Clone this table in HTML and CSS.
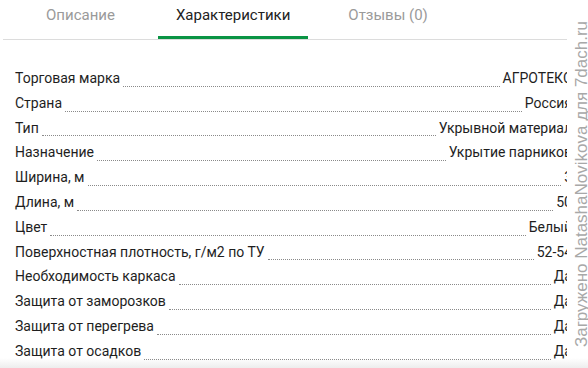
FILE: index.html
```html
<!DOCTYPE html>
<html lang="ru">
<head>
<meta charset="utf-8">
<link rel="stylesheet" href="styles.css">
</head>
<body>
<div class="page">
  <div class="clip">
    <div class="tabs">
      <div class="tab">Описание</div>
      <div class="tab active">Характеристики</div>
      <div class="tab">Отзывы (0)</div>
    </div>
    <div class="specs">
      <div class="row"><span class="label">Торговая марка</span><span class="dots"></span><span class="value">АГРОТЕКС</span></div>
      <div class="row"><span class="label">Страна</span><span class="dots"></span><span class="value">Россия</span></div>
      <div class="row"><span class="label">Тип</span><span class="dots"></span><span class="value">Укрывной материал</span></div>
      <div class="row"><span class="label">Назначение</span><span class="dots"></span><span class="value">Укрытие парников</span></div>
      <div class="row"><span class="label">Ширина, м</span><span class="dots"></span><span class="value">3</span></div>
      <div class="row"><span class="label">Длина, м</span><span class="dots"></span><span class="value">50</span></div>
      <div class="row"><span class="label">Цвет</span><span class="dots"></span><span class="value">Белый</span></div>
      <div class="row"><span class="label">Поверхностная плотность, г/м2 по ТУ</span><span class="dots"></span><span class="value">52-54</span></div>
      <div class="row"><span class="label">Необходимость каркаса</span><span class="dots"></span><span class="value">Да</span></div>
      <div class="row"><span class="label">Защита от заморозков</span><span class="dots"></span><span class="value">Да</span></div>
      <div class="row"><span class="label">Защита от перегрева</span><span class="dots"></span><span class="value">Да</span></div>
      <div class="row"><span class="label">Защита от осадков</span><span class="dots"></span><span class="value">Да</span></div>
    </div>
  </div>
  <div class="watermark">Загружено NatashaNovikova для 7dach.ru</div>
</div>
</body>
</html>
```
FILE: styles.css
```css
html, body {
  margin: 0;
  padding: 0;
  background: #fff;
}
.page {
  position: relative;
  width: 588px;
  height: 368px;
  overflow: hidden;
  font-family: Roboto, "Liberation Sans", sans-serif;
  background: linear-gradient(to bottom, #fff 0, #fff 358px, #ededed 368px);
}
.clip {
  width: 567px;
  height: 368px;
  overflow: hidden;
}
.tabs {
  display: flex;
  margin-left: 3px;
  width: 600px;
  height: 39px;
  border-bottom: 1px solid #dcdcdc;
  padding-left: 25px;
  box-sizing: content-box;
}
.tab {
  box-sizing: border-box;
  height: 39px;
  padding: 6px 18px 0;
  margin-right: 22px;
  font-size: 15px;
  line-height: 18px;
  color: #9a9a9a;
  border-bottom: 3px solid transparent;
}
.tab:first-child {
  margin-right: 25px;
}
.tab.active {
  color: #222;
  border-bottom-color: #0a9444;
}
.specs {
  width: 557px;
  padding: 26px 0 0 15px;
}
.row {
  display: flex;
  height: 24.8px;
  font-size: 14px;
  line-height: 24.8px;
  color: #1e1e1e;
}
.label, .value {
  white-space: nowrap;
  flex: none;
}
.dots {
  flex: 1;
  margin: 0 3px 4px;
  border-bottom: 1px dotted #8a8a8a;
}
.watermark {
  position: absolute;
  left: 581px;
  top: 184px;
  transform: translate(-50%, -50%) rotate(-90deg);
  white-space: nowrap;
  font-family: "Liberation Sans", Arial, sans-serif;
  font-size: 17px;
  line-height: 17px;
  color: #a8a8a8;
}
```
